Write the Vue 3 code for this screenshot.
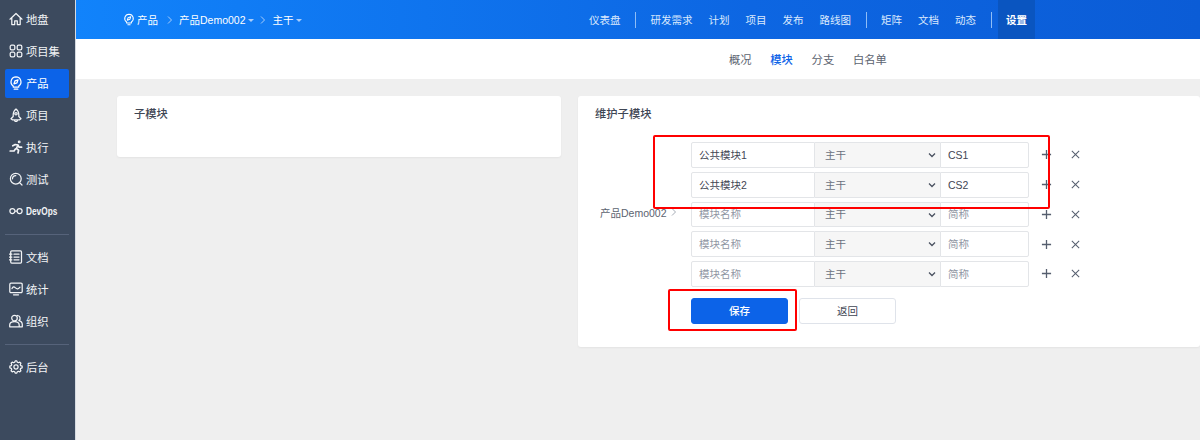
<template>
  <div class="page">
    <aside class="sidebar">
      <template v-for="group in menuGroups" :key="group[0].label">
        <div v-for="item in group" :key="item.label" :class="['menu-item', { active: item.active }]">
          <svg :class="['menu-icon', { heavy: item.heavy }]" viewBox="0 0 14 14"><path :d="item.icon" /></svg>
          <span :class="{ devops: item.label === 'DevOps' }">{{ item.label }}</span>
        </div>
        <div v-if="group !== menuGroups[menuGroups.length - 1]" class="menu-divider"></div>
      </template>
    </aside>

    <div class="content">
      <header class="topbar">
        <div class="crumbs">
          <svg class="crumb-icon" viewBox="0 0 14 14"><path :d="icons.pin" /></svg>
          <span>产品</span>
          <svg class="crumb-arrow first" viewBox="0 0 8 10"><path d="M2 1.5 5.5 5 2 8.5" /></svg>
          <span>产品Demo002</span>
          <i class="caret"></i>
          <svg class="crumb-arrow" viewBox="0 0 8 10"><path d="M2 1.5 5.5 5 2 8.5" /></svg>
          <span>主干</span>
          <i class="caret"></i>
        </div>
        <nav class="topnav">
          <template v-for="item in navItems" :key="item.label">
            <a :class="['nav-link', { active: item.active }]">{{ item.label }}</a>
            <span v-if="item.sep" class="nav-sep"></span>
          </template>
        </nav>
      </header>

      <div class="subnav">
        <a v-for="tab in tabs" :key="tab" :class="['tab', { active: tab === '模块' }]">{{ tab }}</a>
      </div>

      <main class="main">
        <section class="card small-card">
          <div class="card-title">子模块</div>
        </section>

        <section class="card form-card">
          <div class="card-title">维护子模块</div>
          <div class="form">
            <div class="parent-label">
              <span>产品Demo002</span>
              <svg viewBox="0 0 8 10"><path d="M2 1.5 5.5 5 2 8.5" /></svg>
            </div>
            <div class="rows">
              <div v-for="(row, i) in rows" :key="i" class="row">
                <div class="input-group">
                  <input class="name-input" :value="row.name" placeholder="模块名称" />
                  <div class="select-wrap">
                    <select>
                      <option>主干</option>
                    </select>
                    <svg viewBox="0 0 10 10"><path d="M2 3.5 5 6.5 8 3.5" /></svg>
                  </div>
                  <input class="code-input" :value="row.code" placeholder="简称" />
                </div>
                <svg class="row-action plus" viewBox="0 0 12 12"><path d="M6 1v10M1 6h10" /></svg>
                <svg class="row-action" viewBox="0 0 12 12"><path d="M2 2l8 8M10 2l-8 8" /></svg>
              </div>
              <div class="actions">
                <button class="btn primary">保存</button>
                <button class="btn">返回</button>
              </div>
            </div>
          </div>
        </section>
      </main>
    </div>

    <!-- red annotations drawn over the shot -->
    <div class="mark mark-rows"></div>
    <div class="mark mark-save"></div>
  </div>
</template>

<script setup>
const gearPath = () => {
  const pts = []
  for (let i = 0; i < 8; i++) {
    const a = (i / 8) * Math.PI * 2
    for (const [off, r] of [[-0.27, 4.9], [-0.13, 6.2], [0.13, 6.2], [0.27, 4.9]]) {
      pts.push(`${(7 + r * Math.cos(a + off)).toFixed(2)} ${(7 + r * Math.sin(a + off)).toFixed(2)}`)
    }
  }
  return `M${pts.join('L')}ZM7 4.9a2.1 2.1 0 1 0 0 4.2 2.1 2.1 0 0 0 0-4.2Z`
}

const icons = {
  home: 'M1 7.2 7 1.5l6 5.7M2.8 5.8v6.8h2.9V8.8h2.6v3.8h2.9V5.8',
  grid: 'M2.6 1.2h1.8a1.4 1.4 0 0 1 1.4 1.4v1.8a1.4 1.4 0 0 1-1.4 1.4H2.6a1.4 1.4 0 0 1-1.4-1.4V2.6a1.4 1.4 0 0 1 1.4-1.4ZM9.6 1.2h1.8a1.4 1.4 0 0 1 1.4 1.4v1.8a1.4 1.4 0 0 1-1.4 1.4H9.6a1.4 1.4 0 0 1-1.4-1.4V2.6a1.4 1.4 0 0 1 1.4-1.4ZM2.6 8.2h1.8a1.4 1.4 0 0 1 1.4 1.4v1.8a1.4 1.4 0 0 1-1.4 1.4H2.6a1.4 1.4 0 0 1-1.4-1.4V9.6a1.4 1.4 0 0 1 1.4-1.4ZM9.6 8.2h1.8a1.4 1.4 0 0 1 1.4 1.4v1.8a1.4 1.4 0 0 1-1.4 1.4H9.6a1.4 1.4 0 0 1-1.4-1.4V9.6a1.4 1.4 0 0 1 1.4-1.4Z',
  pin: 'M7 .8a5 5 0 0 1 2.8 9.1V11H4.2V9.9A5 5 0 0 1 7 .8ZM5.2 13.2h3.6M9 3.8 8 6.8 5 7.8 6 4.8Z',
  rocket: 'M7 .9C5 2.4 4.2 4.4 4.2 6.8v1.7L2 10.8l1.3 1h7.4l1.3-1-2.2-2.3V6.8C9.8 4.4 9 2.4 7 .9ZM5.5 12a1.5 1.5 0 0 0 3 0M7 4.5a1.2 1.2 0 1 0 0 2.4 1.2 1.2 0 0 0 0-2.4Z',
  runner: 'M9.6 1.9a.6.6 0 1 0 1.2 0 .6.6 0 0 0-1.2 0ZM3.8 5.8 6.2 4.5l2.8.5-1.6 3.5 2.2 1.7-.6 2.8M8.9 5l1.1 2.2h2.6M6.4 9 5 11H1.2',
  search: 'M6.8 1.3a5.4 5.4 0 1 0 0 10.8 5.4 5.4 0 0 0 0-10.8ZM3.5 6.8a3.3 3.3 0 0 1 3.3-3.3M10.6 10.6 13 13',
  infinity: 'M.9 7a2.5 2.5 0 1 0 5 0 2.5 2.5 0 1 0-5 0ZM8.1 7a2.5 2.5 0 1 0 5 0 2.5 2.5 0 1 0-5 0ZM5.9 7h2.2',
  doc: 'M2.7.9h8.8a1 1 0 0 1 1 1v10.2a1 1 0 0 1-1 1H2.7a1 1 0 0 1-1-1V1.9a1 1 0 0 1 1-1ZM5 4.2h5M5 7h5M5 9.8h5M.5 4.2h2.4M.5 7h2.4M.5 9.8h2.4',
  monitor: 'M2 1.2h10a1.2 1.2 0 0 1 1.2 1.2v7a1.2 1.2 0 0 1-1.2 1.2H2A1.2 1.2 0 0 1 .8 9.4v-7A1.2 1.2 0 0 1 2 1.2ZM4.5 12.8h5M3 6.6c1-2.2 2-2.2 3.5-.7s3 1.2 4.5-.7',
  people: 'M5.5 1.3a2.8 2.8 0 1 0 0 5.6 2.8 2.8 0 0 0 0-5.6ZM.7 12.8V11c0-2 2-3.3 4.8-3.3s4.7 1.3 4.7 3.3v1.8ZM8.6 1.5a2.8 2.8 0 0 1 1.3 5.1c2 .5 3.4 2 3.4 3.9v2.3h-3',
  gear: gearPath()
}

const menuGroups = [
  [
    { label: '地盘', icon: icons.home },
    { label: '项目集', icon: icons.grid },
    { label: '产品', icon: icons.pin, active: true },
    { label: '项目', icon: icons.rocket },
    { label: '执行', icon: icons.runner, heavy: true },
    { label: '测试', icon: icons.search },
    { label: 'DevOps', icon: icons.infinity }
  ],
  [
    { label: '文档', icon: icons.doc },
    { label: '统计', icon: icons.monitor },
    { label: '组织', icon: icons.people }
  ],
  [{ label: '后台', icon: icons.gear }]
]

const navItems = [
  { label: '仪表盘', sep: true },
  { label: '研发需求' },
  { label: '计划' },
  { label: '项目' },
  { label: '发布' },
  { label: '路线图', sep: true },
  { label: '矩阵' },
  { label: '文档' },
  { label: '动态', sep: true },
  { label: '设置', active: true }
]

const tabs = ['概况', '模块', '分支', '白名单']

const rows = [
  { name: '公共模块1', code: 'CS1' },
  { name: '公共模块2', code: 'CS2' },
  { name: '', code: '' },
  { name: '', code: '' },
  { name: '', code: '' }
]
</script>

<style>
html,
body {
  margin: 0;
  overflow: hidden;
}
</style>

<style scoped>
.page {
  position: relative;
  display: flex;
  width: 1200px;
  height: 440px;
  overflow: hidden;
  background: #efefef;
  font-family: "Liberation Sans", "Noto Sans CJK SC", sans-serif;
  font-size: 11.3px;
  color: #3f4654;
}

.sidebar {
  flex: none;
  box-sizing: border-box;
  width: 76px;
  padding: 5px 6px 0 5px;
  background: #3c4a5e;
  border-right: 1px solid #d5dae1;
}

.menu-item {
  display: flex;
  align-items: center;
  gap: 3px;
  box-sizing: border-box;
  height: 29px;
  margin-bottom: 3px;
  padding: 0 0 2px 4px;
  border-radius: 2px;
  color: #f2f4f6;
  white-space: nowrap;
}

.menu-item.active {
  background: #0c63e8;
  color: #fff;
}

.menu-icon {
  flex: none;
  width: 14px;
  height: 14px;
  fill: none;
  stroke: currentColor;
  stroke-width: 1.25;
  stroke-linejoin: round;
  stroke-linecap: round;
}

.menu-icon.heavy {
  stroke-width: 1.7;
}

.devops {
  display: inline-block;
  font-size: 11.5px;
  font-weight: 700;
  transform: scaleX(0.72);
  transform-origin: left center;
}

.menu-divider {
  height: 1px;
  margin: 8px 0;
  background: #56637a;
}

.content {
  flex: 1;
  min-width: 0;
}

.topbar {
  display: flex;
  align-items: center;
  box-sizing: border-box;
  height: 39px;
  padding-left: 47px;
  background: linear-gradient(90deg, #1183fb 0%, #0d66e2 60%, #0b5cd6 100%);
  font-size: 10.5px;
  color: #fff;
}

.crumbs {
  display: flex;
  align-items: center;
  white-space: nowrap;
}

.crumb-icon {
  width: 12px;
  height: 13px;
  margin-right: 2px;
  fill: none;
  stroke: #fff;
  stroke-width: 1.2;
  stroke-linejoin: round;
}

.crumb-arrow {
  width: 8px;
  height: 10px;
  margin: 0 6px 0 5px;
  fill: none;
  stroke: #a9cdfa;
  stroke-width: 1;
}

.crumb-arrow.first {
  margin: 0 5px 0 8px;
}

.caret {
  width: 0;
  height: 0;
  margin: 2px 0 0 2px;
  border: 3px solid transparent;
  border-top: 3px solid #a9cdfa;
  border-bottom: 0;
}

.topnav {
  display: flex;
  align-items: center;
  height: 100%;
  margin-left: auto;
  padding-right: 165px;
  white-space: nowrap;
}

.nav-link {
  display: flex;
  align-items: center;
  height: 100%;
  padding: 0 8px;
  color: #dbe9fd;
}

.nav-link.active {
  background: #0a55c0;
  color: #fff;
  font-weight: 700;
}

.nav-sep {
  width: 1px;
  height: 16px;
  margin: 0 6.5px;
  background: #8fbdf6;
}

.subnav {
  display: flex;
  align-items: center;
  gap: 18.7px;
  height: 40px;
  padding-left: 653px;
  background: #fff;
  color: #5c6370;
}

.tab.active {
  color: #0c63e8;
  font-weight: 500;
}

.main {
  display: grid;
  grid-template-columns: 444px 622px;
  gap: 17px;
  align-items: start;
  padding: 17px 0 0 41px;
}

.card {
  background: #fff;
  border-radius: 3px;
  box-shadow: 0 1px 2px rgba(0, 0, 0, 0.05);
}

.small-card {
  height: 61px;
}

.card-title {
  height: 36px;
  padding-left: 17px;
  line-height: 36px;
  font-weight: 500;
  color: #3f4654;
}

.form-card {
  padding-bottom: 23px;
}

.form {
  display: flex;
  margin-top: 10px;
  font-size: 10.5px;
}

.parent-label {
  flex: none;
  display: flex;
  align-items: center;
  box-sizing: border-box;
  width: 113px;
  height: 145px;
  padding: 0 0 5px 22px;
  color: #5c6370;
  white-space: nowrap;
}

.parent-label svg {
  width: 8px;
  height: 10px;
  margin-left: 3px;
  fill: none;
  stroke: #9aa1ad;
  stroke-width: 0.9;
}

.rows {
  display: flex;
  flex-direction: column;
  gap: 4px;
}

.row {
  display: flex;
  align-items: center;
  height: 25.75px;
}

.input-group {
  display: flex;
  height: 100%;
}

input,
select {
  box-sizing: border-box;
  height: 100%;
  margin: 0;
  border: 1px solid #e3e5e8;
  outline: none;
  font: inherit;
  color: #3f4654;
  background: #fff;
}

input::placeholder {
  color: #8f96a3;
  opacity: 1;
}

.name-input {
  width: 124px;
  padding: 0 7px;
  border-radius: 2px 0 0 2px;
}

.code-input {
  width: 89px;
  padding: 0 7px;
  border-left: 1px solid #e3e5e8;
  border-radius: 0 2px 2px 0;
}

.select-wrap {
  position: relative;
  width: 125px;
  height: 100%;
}

select {
  width: 100%;
  padding: 0 0 0 10px;
  border-width: 1px 0;
  background: #f6f6f6;
  color: #6b7280;
  appearance: none;
}

.select-wrap svg {
  position: absolute;
  top: 8px;
  right: 3px;
  width: 10px;
  height: 10px;
  fill: none;
  stroke: #4a5160;
  stroke-width: 1.3;
}

.row-action {
  flex: none;
  width: 11px;
  height: 11px;
  margin-left: 18px;
  fill: none;
  stroke: #555e6e;
  stroke-width: 1.1;
}

.row-action.plus {
  margin-left: 12px;
  stroke-width: 1.4;
}

.actions {
  display: flex;
  gap: 11px;
  margin-top: 7px;
}

.btn {
  width: 97px;
  height: 26px;
  padding: 0;
  border: 1px solid #dfe3ea;
  border-radius: 3px;
  background: #fff;
  font: inherit;
  color: #3f4654;
}

.btn.primary {
  border-color: #0c63e8;
  background: #0c63e8;
  color: #fff;
  font-weight: 500;
}

.mark {
  position: absolute;
  box-sizing: border-box;
  border: 2.5px solid #f00;
  border-radius: 2px;
}

.mark-rows {
  left: 652.5px;
  top: 135px;
  width: 397px;
  height: 73.5px;
}

.mark-save {
  left: 668px;
  top: 289px;
  width: 129px;
  height: 42px;
}
</style>
